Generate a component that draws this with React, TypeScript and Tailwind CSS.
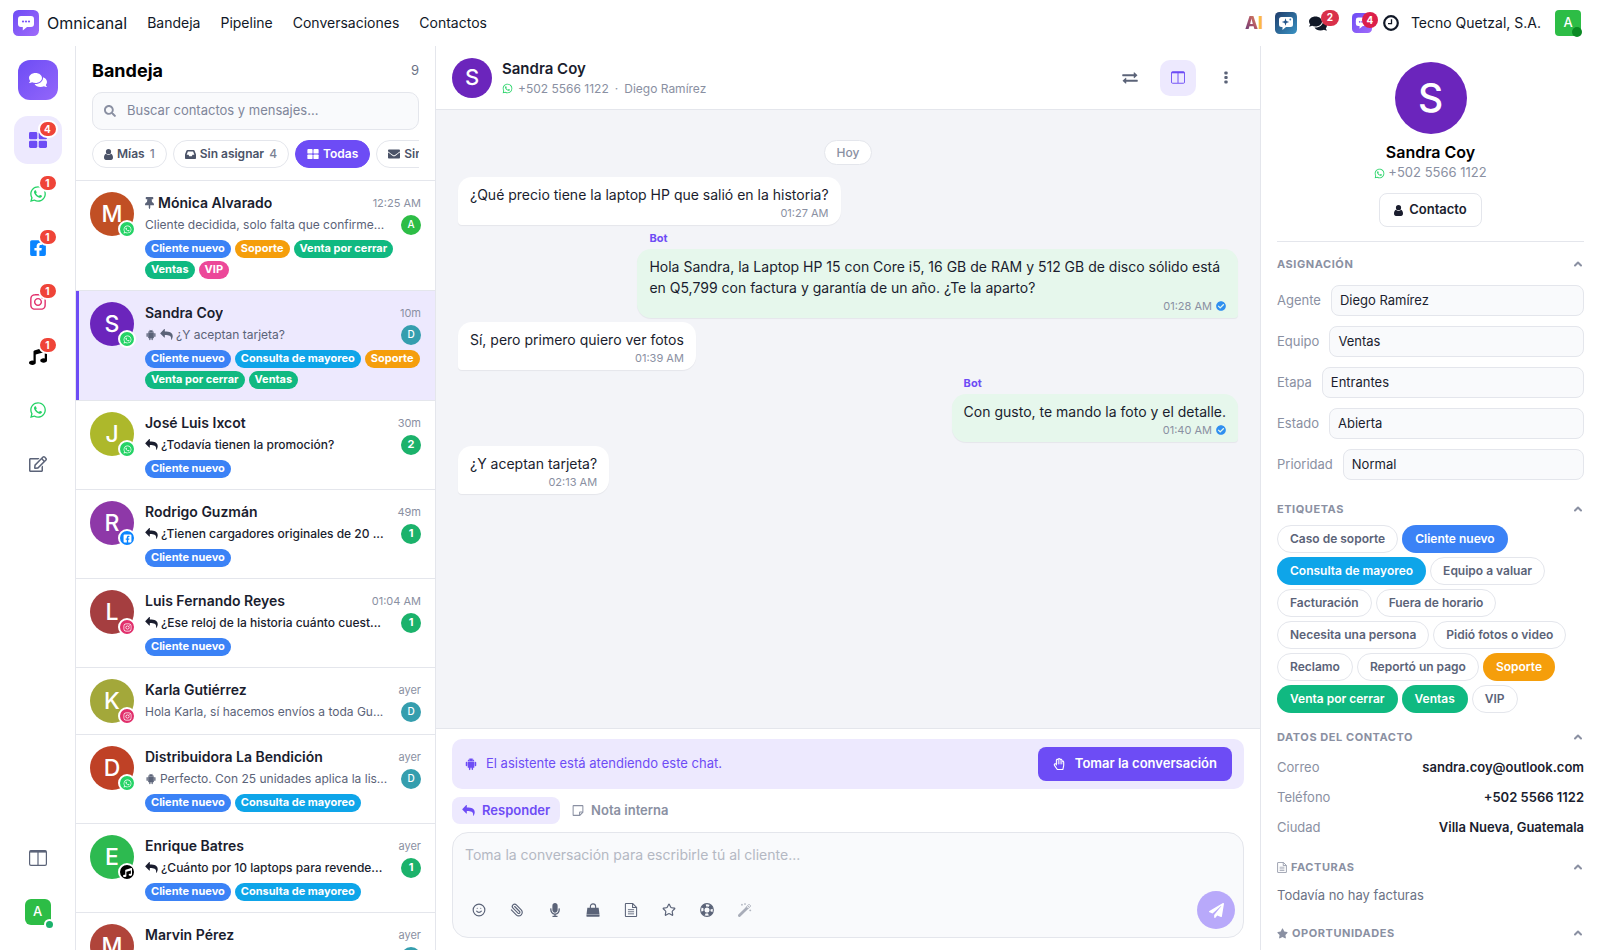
import { useState, type ReactNode } from "react";
import clsx from "clsx";
import { ChevronUp, Paperclip, Smile, Star } from "lucide-react";
import { AiFillAndroid } from "react-icons/ai";
import {
  FaCheckCircle,
  FaComments,
  FaEnvelope,
  FaFacebookSquare,
  FaInstagram,
  FaMicrophone,
  FaMusic,
  FaPaperPlane,
  FaRegEdit,
  FaRegHandPaper,
  FaSearch,
  FaStar,
  FaThumbtack,
  FaWhatsapp,
} from "react-icons/fa";

type IconProps = { className?: string };

function GridIcon({ className }: IconProps) {
  return (
    <svg viewBox="0 0 18 16" fill="currentColor" className={className}>
      <rect x="0" y="0" width="8.3" height="7.3" rx="1.4" />
      <rect x="9.7" y="0" width="8.3" height="7.3" rx="1.4" />
      <rect x="0" y="8.7" width="8.3" height="7.3" rx="1.4" />
      <rect x="9.7" y="8.7" width="8.3" height="7.3" rx="1.4" />
    </svg>
  );
}

function ColumnsIcon({ className }: IconProps) {
  return (
    <svg viewBox="0 0 18 16" fill="none" stroke="currentColor" className={className}>
      <rect x="0.6" y="0.6" width="16.8" height="14.8" rx="1.4" strokeWidth="1.2" />
      <path d="M1 1.6h16" strokeWidth="2" />
      <path d="M9 2v13" strokeWidth="1.2" />
    </svg>
  );
}

function UserIcon({ className }: IconProps) {
  return (
    <svg viewBox="0 0 18 22" fill="currentColor" className={className}>
      <circle cx="9" cy="5.4" r="5.2" />
      <path d="M4 9.4C1.3 10.2 0 13.5 0 17.2 0 20 1.5 22 4 22h10c2.5 0 4-2 4-4.800 0-3.700-1.300-7-4-7.800a7.200 7.200 0 0 1-10 0z" />
    </svg>
  );
}

function InboxIcon({ className }: IconProps) {
  return (
    <svg viewBox="0 0 22 18" fill="currentColor" fillRule="evenodd" className={className}>
      <path d="M5 0h12c.9 0 1.6.4 2 1.2l2.7 7c.2.5.3 1 .3 1.5V16c0 1.100-.9 2-2 2H2c-1.100 0-2-.9-2-2V9.700c0-.5.1-1 .3-1.500l2.700-7C3.400.4 4.100 0 5 0zm.8 2.800L3.300 9.600H7L8.500 12.500h5L15 9.600h3.700l-2.500-6.800z" />
    </svg>
  );
}

function ReplyIcon({ className }: IconProps) {
  return (
    <svg viewBox="0 0 17 15" fill="currentColor" className={className}>
      <path d="M6.200.4v3C13 3.400 17 5.200 17 10c0 1.600-.6 3.200-1.600 4.600-.3.400-.8.200-.7-.3.700-4.600-1.700-6-8.500-6v3c0 .5-.5.7-.8.4L.3 6.500a.8.800 0 0 1 0-1.200L5.400.1c.3-.3.8-.1.8.3z" />
    </svg>
  );
}

function FileTextIcon({ className }: IconProps) {
  return (
    <svg viewBox="0 0 14 16" fill="none" stroke="currentColor" strokeWidth="1.2" className={className}>
      <path d="M1.200.6H9L13.400 5v9.800c0 .3-.3.600-.6.6H1.200c-.3 0-.6-.3-.6-.6V1.200c0-.3.300-.6.600-.6z" />
      <path d="M8.800.8v4.400h4.400" />
      <path d="M3.500 7.600h7M3.500 10h7M3.500 12.400h7" strokeWidth="1" />
    </svg>
  );
}

function NoteIcon({ className }: IconProps) {
  return (
    <svg viewBox="0 0 14 14" fill="none" stroke="currentColor" strokeWidth="1.3" className={className}>
      <path d="M1.300.8h11.400c.3 0 .5.2.5.5v7.900l-4 4H1.300c-.3 0-.5-.2-.5-.5V1.300c0-.3.200-.5.500-.5z" />
      <path d="M9 13V9.500c0-.3.200-.5.500-.5H13" />
    </svg>
  );
}

function WandIcon({ className }: IconProps) {
  return (
    <svg viewBox="0 0 16 16" fill="none" stroke="currentColor" className={className}>
      <path d="M1.600 14.400L9.800 6.200" strokeWidth="3.200" strokeLinecap="round" />
      <path d="M9 5l2-2 2 2-2 2" strokeWidth="1" />
      <path d="M11 3l1.600-1.600L14.600 3.400 13 5" strokeWidth="1" />
      <path d="M4.500 1v2M3.500 2h2M8 .3v1.800M7.100 1.200h1.800M14 7.500v2M13 8.500h2" strokeWidth=".9" />
    </svg>
  );
}

function ClipIcon({ className }: IconProps) {
  return <Paperclip className={clsx("-scale-x-100", className)} />;
}

function SwapIcon({ className }: IconProps) {
  return (
    <svg viewBox="0 0 32 24" fill="currentColor" className={className}>
      <path d="M1.500 4.400h22V1.500c0-.8.800-1.200 1.400-.6L30.500 6c.4.400.4.800 0 1.200l-5.600 5c-.6.600-1.400.2-1.400-.6V8.600h-22c-.5 0-1-.4-1-1V5.400c0-.6.500-1 1-1z" />
      <path d="M30.500 15.400h-22v-2.900c0-.8-.8-1.200-1.400-.6L1.500 17c-.4.400-.4.800 0 1.200l5.600 5c.6.600 1.400.2 1.400-.6v-3h22c.5 0 1-.4 1-1v-2.200c0-.6-.5-1-1-1z" />
    </svg>
  );
}

function DotsIcon({ className }: IconProps) {
  return (
    <svg viewBox="0 0 4 14" fill="currentColor" className={className}>
      <rect x="0.2" y="0.5" width="3.6" height="3.4" rx="1.2" />
      <rect x="0.2" y="5.3" width="3.6" height="3.4" rx="1.2" />
      <rect x="0.2" y="10.1" width="3.6" height="3.4" rx="1.2" />
    </svg>
  );
}

function BagIcon({ className }: IconProps) {
  return (
    <svg viewBox="0 0 16 16" fill="none" className={className}>
      <path d="M1.500 5.500h13l.9 7.500H.6z" fill="currentColor" />
      <path d="M.5 13.500h15v1.300c0 .6-.4 1-1 1h-13c-.6 0-1-.4-1-1z" fill="currentColor" />
      <path d="M5 7.500V4a3 3 0 0 1 6 0v3.500" stroke="currentColor" strokeWidth="1.3" />
    </svg>
  );
}

function LifeRingIcon({ className }: IconProps) {
  return (
    <svg viewBox="0 0 16 16" fill="none" stroke="currentColor" className={className}>
      <circle cx="8" cy="8" r="7.3" strokeWidth="1.2" />
      <circle cx="8" cy="8" r="3.5" strokeWidth="1.2" />
      <circle cx="8" cy="8" r="5.4" strokeWidth="3.6" strokeDasharray="4.6 3.88" strokeDashoffset="-1.94" />
    </svg>
  );
}

function ClockIcon({ className }: IconProps) {
  return (
    <svg viewBox="0 0 16 16" fill="none" stroke="currentColor" className={className}>
      <circle cx="8" cy="8" r="6.8" strokeWidth="2.2" />
      <path d="M8.500 4.200v4.500H5" strokeWidth="1.3" />
    </svg>
  );
}

function OmniLogo({ id, className }: IconProps & { id: string }) {
  return (
    <svg viewBox="0 0 26 26" className={className}>
      <defs>
        <linearGradient id={id} x1="0" y1="0" x2="1" y2="1">
          <stop offset="0" stopColor="#6d4cf5" />
          <stop offset="1" stopColor="#a06bfa" />
        </linearGradient>
      </defs>
      <rect width="26" height="26" rx="5.5" fill={`url(#${id})`} />
      <path
        d="M8 6h10a3 3 0 0 1 3 3v5a3 3 0 0 1-3 3h-4l-4.200 3.400V17H8a3 3 0 0 1-3-3V9a3 3 0 0 1 3-3z"
        fill="#fff"
      />
      <circle cx="10" cy="11.500" r="1.100" fill="#7c56f7" />
      <circle cx="13" cy="11.500" r="1.100" fill="#7c56f7" />
      <circle cx="16" cy="11.500" r="1.100" fill="#7c56f7" />
    </svg>
  );
}

function AssistantLogo({ className }: IconProps) {
  return (
    <svg viewBox="0 0 22 22" className={className}>
      <defs>
        <linearGradient id="assistant-bg" x1="0" y1="0" x2="1" y2="1">
          <stop offset="0" stopColor="#1f3d6b" />
          <stop offset="1" stopColor="#3a93c4" />
        </linearGradient>
      </defs>
      <rect width="22" height="22" rx="4.5" fill="url(#assistant-bg)" />
      <path d="M6.500 5h9A2.500 2.500 0 0 1 18 7.500v5a2.500 2.500 0 0 1-2.500 2.500H11l-3.500 3V15h-1A2.500 2.500 0 0 1 4 12.500v-5A2.500 2.500 0 0 1 6.500 5z" fill="#fff" />
      <path d="M10.500 6.300l.9 2.800 2.800.9-2.800.9-.9 2.800-.9-2.800-2.800-.9 2.800-.9z" fill="#23558a" />
      <circle cx="15.300" cy="7.500" r=".9" fill="#3a7fb5" />
    </svg>
  );
}

const TAGS = {
  nuevo: { label: "Cliente nuevo", color: "bg-[#3b82f6]" },
  mayoreo: { label: "Consulta de mayoreo", color: "bg-[#0ea5e9]" },
  soporte: { label: "Soporte", color: "bg-[#f59e0b]" },
  cerrar: { label: "Venta por cerrar", color: "bg-[#10b981]" },
  ventas: { label: "Ventas", color: "bg-[#10b981]" },
  vip: { label: "VIP", color: "bg-[#ec4899]" },
};

const CHANNELS = {
  whatsapp: { icon: FaWhatsapp, color: "bg-[#25d366]" },
  facebook: { icon: FaFacebookSquare, color: "bg-[#0a84ff]" },
  instagram: { icon: FaInstagram, color: "bg-[#e1306c]" },
  tiktok: { icon: FaMusic, color: "bg-black" },
};

type Conversation = {
  name: string;
  color: string;
  channel: keyof typeof CHANNELS;
  time: string;
  preview: string;
  pinned?: boolean;
  bot?: boolean;
  reply?: boolean;
  unread?: number;
  agent?: "A" | "D";
  tags: (keyof typeof TAGS)[];
};

const CONVERSATIONS: Conversation[] = [
  { name: "Mónica Alvarado", color: "bg-[#c14f24]", channel: "whatsapp", time: "12:25 AM", preview: "Cliente decidida, solo falta que confirme...", pinned: true, agent: "A", tags: ["nuevo", "soporte", "cerrar", "ventas", "vip"] },
  { name: "Sandra Coy", color: "bg-[#6b25bc]", channel: "whatsapp", time: "10m", preview: "¿Y aceptan tarjeta?", bot: true, reply: true, agent: "D", tags: ["nuevo", "mayoreo", "soporte", "cerrar", "ventas"] },
  { name: "José Luis Ixcot", color: "bg-[#adb82b]", channel: "whatsapp", time: "30m", preview: "¿Todavía tienen la promoción?", reply: true, unread: 2, tags: ["nuevo"] },
  { name: "Rodrigo Guzmán", color: "bg-[#8e38a8]", channel: "facebook", time: "49m", preview: "¿Tienen cargadores originales de 20 ...", reply: true, unread: 1, tags: ["nuevo"] },
  { name: "Luis Fernando Reyes", color: "bg-[#a53e40]", channel: "instagram", time: "01:04 AM", preview: "¿Ese reloj de la historia cuánto cuest...", reply: true, unread: 1, tags: ["nuevo"] },
  { name: "Karla Gutiérrez", color: "bg-[#a3a83a]", channel: "instagram", time: "ayer", preview: "Hola Karla, sí hacemos envíos a toda Gu...", agent: "D", tags: [] },
  { name: "Distribuidora La Bendición", color: "bg-[#bf4126]", channel: "whatsapp", time: "ayer", preview: "Perfecto. Con 25 unidades aplica la lis...", bot: true, agent: "D", tags: ["nuevo", "mayoreo"] },
  { name: "Enrique Batres", color: "bg-[#2dba50]", channel: "tiktok", time: "ayer", preview: "¿Cuánto por 10 laptops para revende...", reply: true, unread: 1, tags: ["nuevo", "mayoreo"] },
  { name: "Marvin Pérez", color: "bg-[#b0443a]", channel: "whatsapp", time: "ayer", preview: "", agent: "D", tags: [] },
];

const RAIL = [
  { label: "WhatsApp", icon: FaWhatsapp, color: "text-[#25d366]", badge: 1 },
  { label: "Facebook", icon: FaFacebookSquare, color: "text-[#0a84ff]", badge: 1 },
  { label: "Instagram", icon: FaInstagram, color: "text-[#e1306c]", badge: 1 },
  { label: "TikTok", icon: FaMusic, color: "text-black", badge: 1 },
  { label: "WhatsApp 2", icon: FaWhatsapp, color: "text-[#25d366]", badge: 0 },
  { label: "Redactar", icon: FaRegEdit, color: "text-[#5b6378]", badge: 0 },
];

const MESSAGES = [
  { text: "¿Qué precio tiene la laptop HP que salió en la historia?", time: "01:27 AM" },
  { text: "Hola Sandra, la Laptop HP 15 con Core i5, 16 GB de RAM y 512 GB de disco sólido está en Q5,799 con factura y garantía de un año. ¿Te la aparto?", time: "01:28 AM", bot: true },
  { text: "Sí, pero primero quiero ver fotos", time: "01:39 AM" },
  { text: "Con gusto, te mando la foto y el detalle.", time: "01:40 AM", bot: true },
  { text: "¿Y aceptan tarjeta?", time: "02:13 AM" },
];

const FIELDS = [
  { id: "agente", label: "Agente", value: "Diego Ramírez" },
  { id: "equipo", label: "Equipo", value: "Ventas" },
  { id: "etapa", label: "Etapa", value: "Entrantes" },
  { id: "estado", label: "Estado", value: "Abierta" },
  { id: "prioridad", label: "Prioridad", value: "Normal" },
];

const LABELS = [
  { label: "Caso de soporte" },
  { label: "Cliente nuevo", color: "bg-[#3b82f6]" },
  { label: "Consulta de mayoreo", color: "bg-[#0ea5e9]" },
  { label: "Equipo a valuar" },
  { label: "Facturación" },
  { label: "Fuera de horario" },
  { label: "Necesita una persona" },
  { label: "Pidió fotos o video" },
  { label: "Reclamo" },
  { label: "Reportó un pago" },
  { label: "Soporte", color: "bg-[#f59e0b]" },
  { label: "Venta por cerrar", color: "bg-[#10b981]" },
  { label: "Ventas", color: "bg-[#10b981]" },
  { label: "VIP" },
];

const CONTACT = [
  ["Correo", "sandra.coy@outlook.com"],
  ["Teléfono", "+502 5566 1122"],
  ["Ciudad", "Villa Nueva, Guatemala"],
];

const TOOLS = [
  { label: "Emoji", icon: Smile },
  { label: "Adjuntar", icon: ClipIcon },
  { label: "Nota de voz", icon: FaMicrophone },
  { label: "Productos", icon: BagIcon },
  { label: "Plantillas", icon: FileTextIcon },
  { label: "Favoritos", icon: Star },
  { label: "Ayuda", icon: LifeRingIcon },
];

function Navbar() {
  return (
    <nav className="flex h-[46px] shrink-0 items-center pl-[13px] pr-[19px]">
      <OmniLogo id="logo-main" className="h-[26px] w-[26px]" />
      <a href="#" className="ml-2 text-base text-[#111827]">Omnicanal</a>
      <div className="ml-5 flex gap-5 text-sm text-[#111827]">
        <a href="#">Bandeja</a>
        <a href="#">Pipeline</a>
        <a href="#">Conversaciones</a>
        <a href="#">Contactos</a>
      </div>
      <div className="ml-auto flex items-center">
        <button aria-label="AI" className="text-[17px] font-extrabold leading-5">
          <span className="bg-linear-to-tr from-[#5f3a78] via-[#a8506a] to-[#f5a03c] bg-clip-text text-transparent">A</span>
          <span className="text-[#fbb945]">I</span>
        </button>
        <button aria-label="Asistente" className="ml-3">
          <AssistantLogo className="h-[22px] w-[22px]" />
        </button>
        <button aria-label="Mensajes" className="relative ml-3 text-[#111827]">
          <FaComments className="h-[17px] w-[18px]" />
          <span className="absolute -top-[5px] left-3 grid h-4 w-[18px] place-items-center rounded-full bg-[#d9304a] text-[10px] font-bold text-white">2</span>
        </button>
        <button aria-label="Omnicanal" className="relative ml-[25px]">
          <OmniLogo id="logo-tray" className="h-5 w-5" />
          <span className="absolute -top-px left-[10px] grid h-4 w-4 place-items-center rounded-full bg-[#dc1f4a] text-[10px] font-bold text-white">4</span>
        </button>
        <button aria-label="Actividades" className="ml-[11px] text-[#111827]">
          <ClockIcon className="h-4 w-4" />
        </button>
        <button className="ml-3 text-sm text-[#111827]">Tecno Quetzal, S.A.</button>
        <button aria-label="Perfil" className="relative ml-[14px] grid h-[26px] w-[26px] place-items-center rounded bg-[#2dbd46] text-[13px] font-medium text-white">
          A
          <span className="absolute -bottom-px -right-px h-[10px] w-[10px] rounded-full bg-[#0b8a24]" />
        </button>
      </div>
    </nav>
  );
}

function Badge({ count }: { count: number }) {
  return (
    <span className="absolute right-1 top-1 grid h-[18px] min-w-5 place-items-center rounded-full border-2 border-white bg-[#ef4438] text-[10px] font-bold leading-none text-white">
      {count}
    </span>
  );
}

function Rail() {
  return (
    <aside className="flex w-[76px] shrink-0 flex-col items-center border-r border-[#e4e6ec] py-[14px]">
      <button aria-label="Chats" className="grid h-10 w-10 place-items-center rounded-xl bg-linear-to-br from-[#6d4cf5] to-[#9466fa] text-white">
        <FaComments className="h-[18px] w-[18px]" />
      </button>
      <div className="mt-4 flex flex-col gap-[6px]">
        <button aria-label="Todas" className="relative grid h-12 w-12 place-items-center rounded-[14px] bg-[#ede9fe] text-[#6d4cf5]">
          <GridIcon className="h-4 w-[18px]" />
          <Badge count={4} />
        </button>
        {RAIL.map(({ label, icon: Icon, color, badge }) => (
          <button key={label} aria-label={label} className={clsx("relative grid h-12 w-12 place-items-center", color)}>
            <Icon className="h-[18px] w-[18px]" />
            {badge > 0 && <Badge count={badge} />}
          </button>
        ))}
      </div>
      <div className="mt-auto flex flex-col gap-[6px]">
        <button aria-label="Columnas" className="grid h-12 w-12 place-items-center text-[#5b6378]">
          <ColumnsIcon className="h-4 w-[18px]" />
        </button>
        <button aria-label="Mi cuenta" className="grid h-12 w-12 place-items-center">
          <span className="relative grid h-[26px] w-[26px] place-items-center rounded-md bg-[#2dbd46] text-[13px] font-medium text-white">
            A
            <span className="absolute -bottom-[5px] -right-1 h-[11px] w-[11px] rounded-full border-2 border-white bg-[#1bb26b]" />
          </span>
        </button>
      </div>
    </aside>
  );
}

function Chip({ icon, label, count, active }: { icon: ReactNode; label: string; count?: number; active?: boolean }) {
  return (
    <button
      className={clsx(
        "flex h-7 shrink-0 items-center gap-1 rounded-full border px-[11px] text-xs font-semibold",
        active ? "border-[#6d4cf5] bg-[#6d4cf5] text-white" : "border-[#e4e6ec] bg-white text-[#4b5368]",
      )}
    >
      {icon}
      {label}
      {count !== undefined && <span className="ml-px font-medium text-[#7b8294]">{count}</span>}
    </button>
  );
}

function ConversationRow({ item, active, onSelect }: { item: Conversation; active: boolean; onSelect: () => void }) {
  const channel = CHANNELS[item.channel];
  return (
    <button
      onClick={onSelect}
      className={clsx(
        "flex w-full shrink-0 gap-[11px] border-b border-[#e4e6ec] px-[14px] py-[11px] text-left",
        active && "bg-[#ede9fe] shadow-[inset_3px_0_0_#6d4cf5]",
      )}
    >
      <span className={clsx("relative grid h-11 w-11 shrink-0 place-items-center rounded-full text-[23px] font-medium text-white", item.color)}>
        {item.name[0]}
        <span className={clsx("absolute -bottom-[2px] -right-[2px] grid h-[18px] w-[18px] place-items-center rounded-full border-2 border-white text-white", channel.color)}>
          <channel.icon className="h-[9px] w-[9px]" />
        </span>
      </span>
      <span className="min-w-0 flex-1">
        <span className="flex h-[22px] items-center gap-1">
          {item.pinned && <FaThumbtack className="h-3 w-[9px] shrink-0 text-[#5b6378]" />}
          <span className="truncate text-sm font-semibold text-[#1a1d2e]">{item.name}</span>
          <span className="ml-auto shrink-0 pt-px text-[11px] text-[#8a90a2]">{item.time}</span>
        </span>
        <span className={clsx("flex h-[21px] items-center gap-[3px] text-xs", item.unread ? "font-medium text-[#1a1d2e]" : "text-[#5b6378]")}>
          {item.bot && <AiFillAndroid className="h-3 w-3 shrink-0" />}
          {item.reply && <ReplyIcon className="h-[11px] w-[13px] shrink-0" />}
          <span className="min-w-0 flex-1 whitespace-nowrap">{item.preview}</span>
          {item.unread && (
            <span className="grid h-5 w-5 shrink-0 place-items-center rounded-full bg-[#1bb26b] text-[11px] font-bold text-white">{item.unread}</span>
          )}
          {item.agent && (
            <span className={clsx("grid h-5 w-5 shrink-0 place-items-center rounded-full text-[10px] font-medium text-white", item.agent === "A" ? "bg-[#2dbd46]" : "bg-[#359eae]")}>
              {item.agent}
            </span>
          )}
        </span>
        {item.tags.length > 0 && (
          <span className="mt-[5px] flex flex-wrap gap-x-1 gap-y-[3px]">
            {item.tags.map((tag) => (
              <span key={tag} className={clsx("h-[18px] rounded-full px-[6px] text-[11px] font-bold leading-[17px] text-white", TAGS[tag].color)}>
                {TAGS[tag].label}
              </span>
            ))}
          </span>
        )}
      </span>
    </button>
  );
}

function Inbox() {
  const [selected, setSelected] = useState("Sandra Coy");
  return (
    <section className="flex w-[360px] shrink-0 flex-col border-r border-[#e4e6ec]">
      <header className="border-b border-[#e4e6ec] px-4 pb-3 pt-[11px]">
        <div className="flex h-7 items-center justify-between">
          <h1 className="text-lg font-bold text-black">Bandeja</h1>
          <span className="text-[13px] text-[#6b7285]">9</span>
        </div>
        <label className="mt-[7px] flex h-[38px] items-center gap-[11px] rounded-[10px] border border-[#e4e6ec] bg-[#f9fafc] px-[11px]">
          <FaSearch className="h-3 w-3 shrink-0 text-[#8a90a2]" />
          <input type="text" aria-label="Buscar" placeholder="Buscar contactos y mensajes..." className="w-full bg-transparent text-[13px] outline-none placeholder:text-[#80869a]" />
        </label>
        <div className="mt-[10px] flex gap-[6px] overflow-hidden">
          <Chip icon={<UserIcon className="h-[11px] w-[9px]" />} label="Mías" count={1} />
          <Chip icon={<InboxIcon className="h-[9px] w-[11px]" />} label="Sin asignar" count={4} />
          <Chip icon={<GridIcon className="h-[10px] w-3" />} label="Todas" active />
          <Chip icon={<FaEnvelope className="h-3 w-3" />} label="Sin leer" />
        </div>
      </header>
      <div className="flex min-h-0 flex-1 flex-col overflow-hidden">
        {CONVERSATIONS.map((item) => (
          <ConversationRow key={item.name} item={item} active={item.name === selected} onSelect={() => setSelected(item.name)} />
        ))}
      </div>
    </section>
  );
}

function Chat() {
  return (
    <main className="flex min-w-0 flex-1 flex-col">
      <header className="flex h-16 shrink-0 items-center border-b border-[#e4e6ec] px-4">
        <span className="grid h-10 w-10 place-items-center rounded-full bg-[#6b25bc] text-[22px] font-medium text-white">S</span>
        <div className="ml-[10px] pt-[2px]">
          <h2 className="text-[15px] font-semibold leading-5 text-[#1a1d2e]">Sandra Coy</h2>
          <p className="flex h-5 items-center text-xs text-[#8a90a2]">
            <FaWhatsapp className="mr-[5px] h-[11px] w-[11px] text-[#25d366]" />
            +502 5566 1122<span className="mx-[6px]">·</span>Diego Ramírez
          </p>
        </div>
        <div className="ml-auto flex gap-3 text-[#5b6378]">
          <button aria-label="Transferir" className="grid h-9 w-9 place-items-center">
            <SwapIcon className="h-3 w-4" />
          </button>
          <button aria-label="Panel" className="grid h-9 w-9 place-items-center rounded-[10px] bg-[#ede9fe] text-[#6d4cf5]">
            <ColumnsIcon className="h-[13px] w-[14px]" />
          </button>
          <button aria-label="Más" className="grid h-9 w-9 place-items-center">
            <DotsIcon className="h-[13px] w-1" />
          </button>
        </div>
      </header>

      <div className="flex min-h-0 flex-1 flex-col gap-1 overflow-hidden bg-[#f3f4f8] px-[22px] pt-[30px]">
        <span className="mb-2 self-center rounded-full border border-[#e4e6ec] bg-white px-3 text-xs font-medium leading-[23px] text-[#8a90a2]">Hoy</span>
        {MESSAGES.map((m) => (
          <div key={m.time} className={clsx("max-w-[77%]", m.bot ? "self-end" : "self-start")}>
            {m.bot && <p className="h-5 px-3 text-[11px] font-bold leading-[18px] text-[#6d4cf5]">Bot</p>}
            <div
              className={clsx(
                "rounded-[14px] px-3 pb-1 pt-[7px] shadow-[0_1px_1px_rgba(20,24,40,0.06)]",
                m.bot ? "rounded-br-sm bg-[#e6f7ec]" : "rounded-bl-sm bg-white",
              )}
            >
              <p className="text-sm leading-[21px] text-[#1a1d2e]">{m.text}</p>
              <p className="flex items-center justify-end gap-1 text-[11px] leading-4 text-[#8a90a2]">
                {m.time}
                {m.bot && <FaCheckCircle className="h-[10px] w-[10px] text-[#2f8ff0]" />}
              </p>
            </div>
          </div>
        ))}
      </div>

      <footer className="shrink-0 border-t border-[#e4e6ec] px-4 pb-3 pt-[10px]">
        <div className="flex h-[50px] items-center rounded-[10px] bg-[#ede9fe] px-3 text-[13px] text-[#6d4cf5]">
          <AiFillAndroid className="h-[14px] w-[14px]" />
          <span className="ml-2">El asistente está atendiendo este chat.</span>
          <button className="ml-auto flex h-[34px] items-center gap-[10px] rounded-lg bg-[#6d4cf5] px-[15px] font-semibold text-white">
            <FaRegHandPaper className="h-3 w-3" />
            Tomar la conversación
          </button>
        </div>
        <div className="mt-2 flex text-[13px] font-semibold">
          <button className="flex h-[27px] items-center gap-[7px] rounded-lg bg-[#ede9fe] px-[10px] text-[#6d4cf5]">
            <ReplyIcon className="h-[11px] w-[13px]" />
            Responder
          </button>
          <button className="ml-[2px] flex h-[27px] items-center gap-[7px] px-[10px] text-[#8a90a2]">
            <NoteIcon className="h-[11px] w-3" />
            Nota interna
          </button>
        </div>
        <div className="mt-2 rounded-2xl border border-[#e4e6ec] bg-[#f9fafc] p-2">
          <textarea
            aria-label="Mensaje"
            rows={2}
            placeholder="Toma la conversación para escribirle tú al cliente..."
            className="block h-[50px] w-full resize-none bg-transparent px-1 pt-1 text-sm leading-5 outline-none placeholder:text-[#b4b8c3]"
          />
          <div className="flex h-[38px] items-center gap-[2px] text-[#5b6378]">
            {TOOLS.map(({ label, icon: Icon }) => (
              <button key={label} aria-label={label} className="grid h-9 w-9 place-items-center">
                <Icon className="h-[14px] w-[14px]" />
              </button>
            ))}
            <button aria-label="Mejorar texto" className="grid h-9 w-9 place-items-center opacity-50">
              <WandIcon className="h-[14px] w-[14px]" />
            </button>
            <button aria-label="Enviar" className="ml-auto grid h-[38px] w-[38px] place-items-center rounded-full bg-[#b8a9fa] text-white">
              <FaPaperPlane className="h-[15px] w-[15px]" />
            </button>
          </div>
        </div>
      </footer>
    </main>
  );
}

function Section({ title, icon, children }: { title: string; icon?: ReactNode; children?: ReactNode }) {
  return (
    <section>
      <button className="mb-[6px] flex h-5 w-full items-center gap-1 text-[11px] font-bold uppercase tracking-wider text-[#8a90a2]">
        {icon}
        {title}
        <ChevronUp className="ml-auto h-3 w-3" strokeWidth={4} />
      </button>
      {children}
    </section>
  );
}

function ContactPanel() {
  return (
    <aside className="flex w-[340px] shrink-0 flex-col overflow-hidden border-l border-[#e4e6ec] px-4 pt-4 text-[13px] text-[#8a90a2]">
      <div className="flex shrink-0 flex-col items-center border-b border-[#e4e6ec] pb-[14px]">
        <span className="grid h-[72px] w-[72px] place-items-center rounded-full bg-[#6b25bc] text-[39px] font-medium text-white">S</span>
        <h2 className="mt-2 text-base font-semibold leading-5 text-black">Sandra Coy</h2>
        <p className="flex h-[22px] items-center gap-[3px]">
          <FaWhatsapp className="h-[11px] w-[11px] text-[#25d366]" />
          +502 5566 1122
        </p>
        <button className="mt-[9px] flex h-[34px] items-center gap-[6px] rounded-lg border border-[#e4e6ec] px-[14px] font-semibold text-[#1a1d2e]">
          <UserIcon className="h-[11px] w-[9px]" />
          Contacto
        </button>
      </div>

      <div className="flex flex-col gap-[14px] pt-3">
        <Section title="Asignación">
          {FIELDS.map((f) => (
            <div key={f.id} className="flex items-center gap-[10px] py-[5px]">
              <label htmlFor={f.id}>{f.label}</label>
              <select id={f.id} className="h-[31px] min-w-0 flex-1 appearance-none rounded-lg border border-[#e4e6ec] bg-[#f9fafc] px-2 text-[13px] text-[#1a1d2e]">
                <option>{f.value}</option>
              </select>
            </div>
          ))}
        </Section>
        <Section title="Etiquetas">
          <div className="flex flex-wrap gap-1">
            {LABELS.map((l) => (
              <button
                key={l.label}
                className={clsx(
                  "h-7 rounded-full border px-3 text-xs font-semibold",
                  l.color ? ["border-transparent text-white", l.color] : "border-[#e4e6ec] text-[#5b6378]",
                )}
              >
                {l.label}
              </button>
            ))}
          </div>
        </Section>
        <Section title="Datos del contacto">
          <dl>
            {CONTACT.map(([label, value]) => (
              <div key={label} className="flex h-[30px] items-center justify-between">
                <dt>{label}</dt>
                <dd className="font-semibold text-[#1a1d2e]">{value}</dd>
              </div>
            ))}
          </dl>
        </Section>
        <Section title="Facturas" icon={<FileTextIcon className="h-[11px] w-[10px]" />}>
          <p className="h-[26px] leading-6 text-[#6b7285]">Todavía no hay facturas</p>
        </Section>
        <Section title="Oportunidades" icon={<FaStar className="h-[11px] w-[11px]" />} />
      </div>
    </aside>
  );
}

export default function App() {
  return (
    <div className="flex h-screen flex-col overflow-hidden bg-white font-['Inter',sans-serif]">
      <Navbar />
      <div className="flex min-h-0 flex-1">
        <Rail />
        <Inbox />
        <Chat />
        <ContactPanel />
      </div>
    </div>
  );
}
